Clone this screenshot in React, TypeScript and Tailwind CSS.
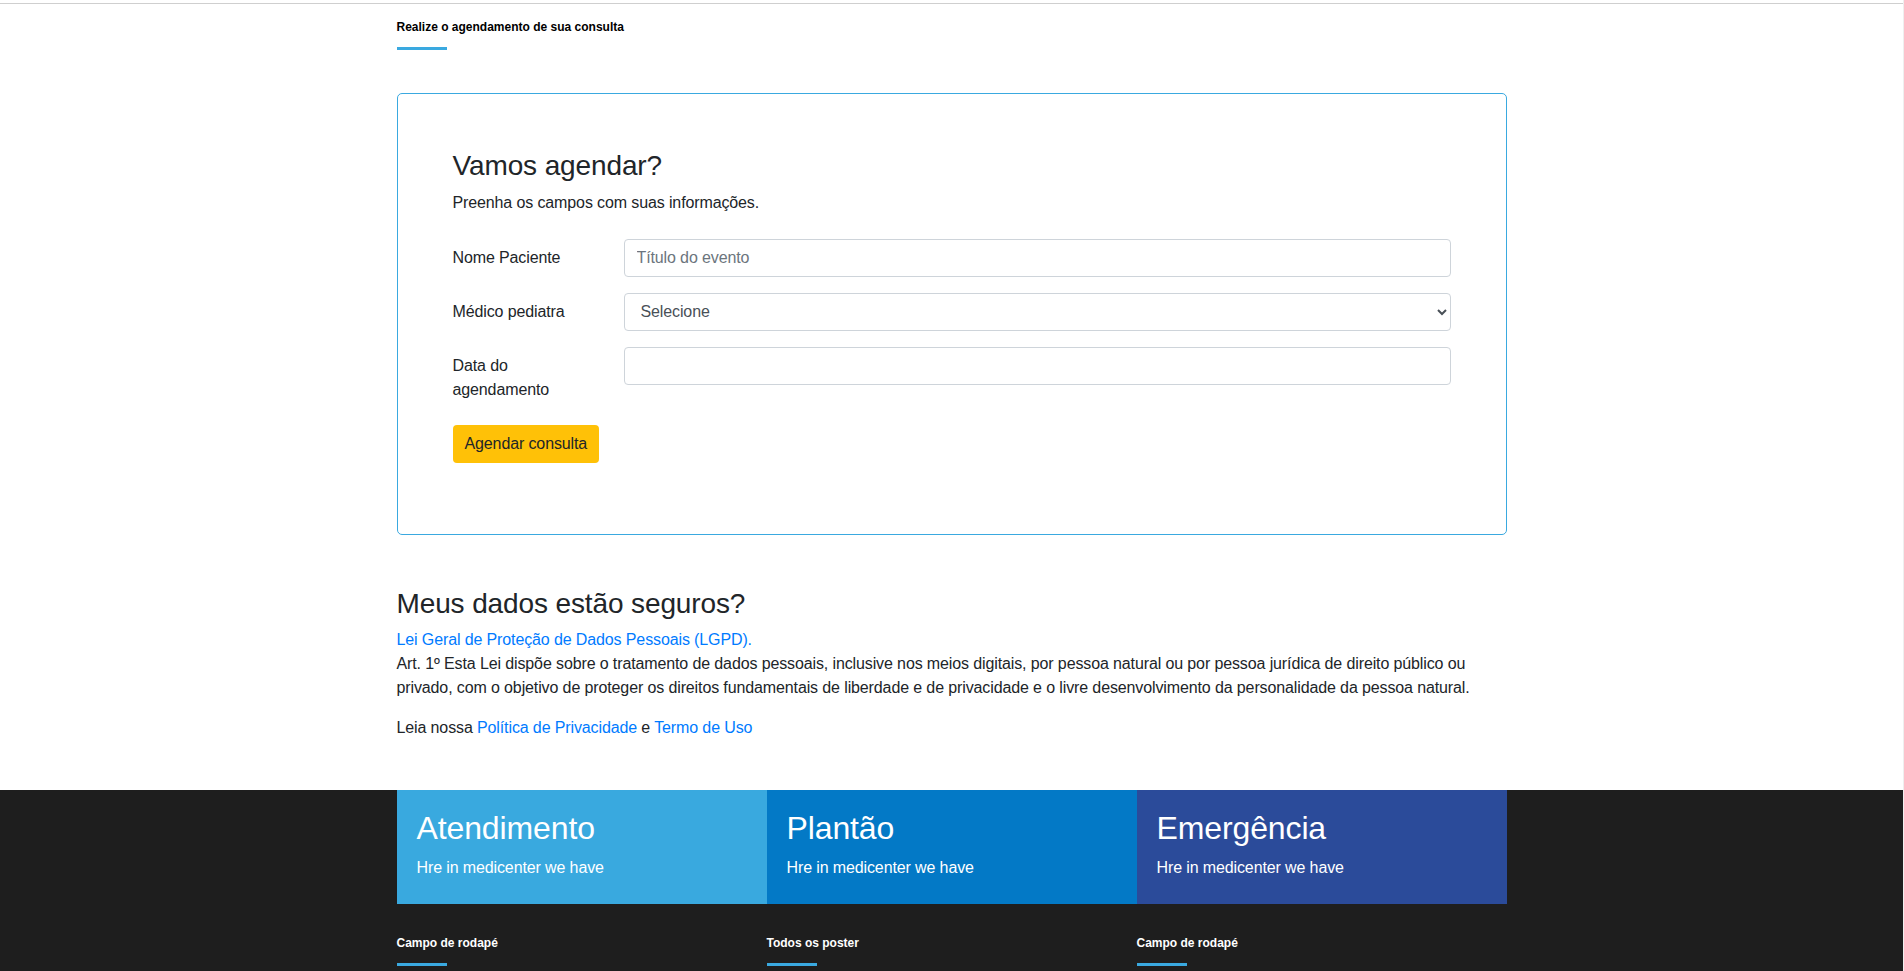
import React from "react";

const boxes = [
  { title: "Atendimento", bg: "bg-[#39a9df]" },
  { title: "Plantão", bg: "bg-[#0379c6]" },
  { title: "Emergência", bg: "bg-[#2b4b9a]" },
];

const footerCols = ["Campo de rodapé", "Todos os poster", "Campo de rodapé"];

function SectionTitle({ children }: { children: React.ReactNode }) {
  return (
    <div>
      <h6 className="text-[12px] font-bold leading-[16px] tracking-normal text-black">{children}</h6>
      <div className="mt-[12px] h-[3px] w-[50px] bg-[#3aa9e0]" />
    </div>
  );
}

function FormRow({ label, children }: { label: string; children: React.ReactNode }) {
  return (
    <div className="mb-4 flex items-start">
      <label className="mr-[30px] w-[141px] shrink-0 py-[7px] leading-6">{label}</label>
      <div className="flex-1">{children}</div>
    </div>
  );
}

export default function App() {
  return (
    <div className="flex min-h-screen flex-col border-r border-[#efefef] bg-white font-['Liberation_Sans',Arial,sans-serif] text-base leading-6 tracking-[-0.12px] text-[#212529]">
      <div className="h-[4px] border-b border-[#cfcfcf]" />

      <section className="mx-auto w-[1110px] pb-[34px] pt-[15px]">
        <SectionTitle>Realize o agendamento de sua consulta</SectionTitle>

        <div className="mt-[43px] rounded-[5px] border border-[#3aa9e0] p-[55px]">
          <h3 className="mb-2 text-[28px] leading-[1.2]">Vamos agendar?</h3>
          <p className="mb-6">Preenha os campos com suas informações.</p>

          <FormRow label="Nome Paciente">
            <input
              type="text"
              placeholder="Título do evento"
              className="h-[38px] w-full rounded-[4px] border border-[#ced4da] px-3 text-[#495057] outline-none placeholder:text-[#6c757d]"
            />
          </FormRow>
          <FormRow label="Médico pediatra">
            <select className="h-[38px] w-full rounded-[4px] border border-[#ced4da] bg-white px-3 text-[#495057] outline-none">
              <option>Selecione</option>
            </select>
          </FormRow>
          <FormRow label="Data do agendamento">
            <input
              type="text"
              className="h-[38px] w-full rounded-[4px] border border-[#ced4da] px-3 text-[#495057] outline-none"
            />
          </FormRow>

          <button className="mb-4 h-[38px] rounded-[4px] bg-[#ffc107] px-3 text-[#212529]">
            Agendar consulta
          </button>
        </div>

        <h3 className="mb-2 mt-[52px] text-[28px] leading-[1.2]">Meus dados estão seguros?</h3>
        <a className="block text-[#007bff]">Lei Geral de Proteção de Dados Pessoais (LGPD).</a>
        <p className="mb-4">
          Art. 1º Esta Lei dispõe sobre o tratamento de dados pessoais, inclusive nos meios digitais, por pessoa
          natural ou por pessoa jurídica de direito público ou privado, com o objetivo de proteger os direitos
          fundamentais de liberdade e de privacidade e o livre desenvolvimento da personalidade da pessoa natural.
        </p>
        <p className="mb-4">
          Leia nossa <a className="text-[#007bff]">Política de Privacidade</a> e{" "}
          <a className="text-[#007bff]">Termo de Uso</a>
        </p>
      </section>

      <footer className="flex-1 bg-[#1e1e1e] pb-[4px]">
        <div className="mx-auto grid w-[1110px] grid-cols-3">
          {boxes.map((b) => (
            <div key={b.title} className={`${b.bg} h-[114px] pl-5 pt-[19px] text-white`}>
              <h2 className="mb-[8px] text-[32px] leading-[1.2]">{b.title}</h2>
              <p>Hre in medicenter we have</p>
            </div>
          ))}
        </div>
        <div className="mx-auto mt-[31px] grid w-[1110px] grid-cols-3">
          {footerCols.map((c, i) => (
            <div key={i}>
              <h6 className="text-[12px] font-bold leading-[16px] tracking-normal text-white">{c}</h6>
              <div className="mt-[12px] h-[3px] w-[50px] bg-[#3aa9e0]" />
            </div>
          ))}
        </div>
      </footer>
    </div>
  );
}
